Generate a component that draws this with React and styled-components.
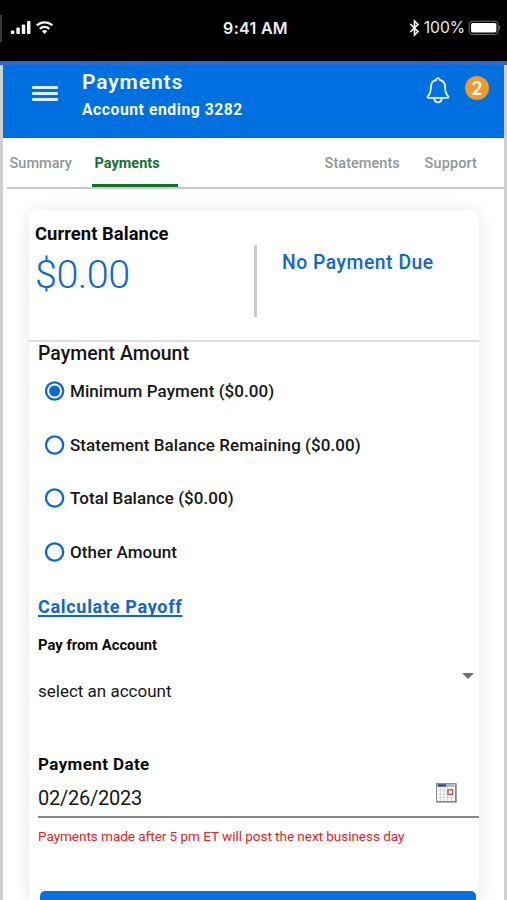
import React from "react";
import styled, { createGlobalStyle } from "styled-components";

const Global = createGlobalStyle`
  *, *::before, *::after { box-sizing: border-box; }
  body { margin: 0; background: #fff; overflow: hidden; }
`;

const Screen = styled.div`
  width: 507px;
  height: 900px;
  overflow: hidden;
  display: flex;
  flex-direction: column;
  font-family: Roboto, "Liberation Sans", sans-serif;
  background: #fff;
`;

const StatusBar = styled.header`
  flex: none;
  display: grid;
  grid-template-columns: 1fr auto 1fr;
  height: 61px;
  padding: 0 0 5px 4px;
  align-items: center;
  background: #000;
`;

const StatusGroup = styled.div`
  display: flex;
  align-items: center;
  margin-left: ${(p) => (p.$end ? 0 : -4)}px;
  padding-right: ${(p) => (p.$end ? 6 : 0)}px;
  justify-content: ${(p) => (p.$end ? "flex-end" : "flex-start")};
`;

const EdgeMark = styled.span`
  width: 2px;
  height: 27px;
  margin-right: 8px;
  background: #3a3a3a;
`;

const Label = styled.span`
  display: block;
  white-space: nowrap;
  font-size: ${(p) => p.$size}px;
  font-weight: ${(p) => p.$weight || 400};
  line-height: ${(p) => p.$line || 24}px;
  letter-spacing: ${(p) => p.$spacing || 0}px;
  color: ${(p) => p.$color || "#161616"};
`;

const StatusLabel = styled(Label)`
  font-family: Inter, Roboto, sans-serif;
`;

const Bluetooth = styled.svg`
  margin-right: 4px;
`;

const Body = styled.div`
  flex: 1;
  min-height: 0;
  display: flex;
  flex-direction: column;
  border-top: 4px solid #2c68cd;
`;

const Frame = styled.div`
  flex: 1;
  min-height: 0;
  display: flex;
  flex-direction: column;
  border: solid #d0d0d0;
  border-width: 0 3px;
`;

const AppBar = styled.div`
  flex: none;
  display: flex;
  height: 73px;
  padding: 0 15px 0 29px;
  background: #0070e0;
`;

const MenuButton = styled.button`
  display: flex;
  flex-direction: column;
  justify-content: space-between;
  width: 26px;
  height: 15px;
  margin: 21px 24px 0 0;
  padding: 0;
  border: 0;
  background: none;
`;

const MenuLine = styled.span`
  width: 100%;
  height: 3px;
  border-radius: 1px;
  background: #dceeff;
`;

const Heading = styled.div`
  flex: 1;
  padding-top: 3px;
`;

const Bell = styled.svg`
  margin: 12px 15px 0 0;
`;

const Badge = styled.span`
  display: flex;
  align-items: center;
  justify-content: center;
  width: 24px;
  height: 24px;
  margin-top: 11px;
  border-radius: 50%;
  background: #ee9b2d;
`;

const BadgeCount = styled(Label)`
  font-family: Lato, sans-serif;
`;

const Tabs = styled.nav`
  flex: none;
  display: flex;
  height: 51px;
  margin-left: 4px;
  border-bottom: 2px solid #c9c9c9;
`;

const Tab = styled.a`
  height: 49px;
  width: ${(p) => p.$width}px;
  padding: 14px 0 0 2.6px;
  margin-left: ${(p) => p.$gap || 0}px;
  border-bottom: ${(p) => (p.$active ? "3px solid #0b7228" : "0")};
`;

const Card = styled.main`
  flex: 1;
  min-height: 0;
  width: 450px;
  margin: 21px 0 0 26px;
  border-radius: 8px 8px 0 0;
  background: #fff;
  box-shadow: 0 2px 18px rgba(0, 0, 0, 0.11);
`;

const Summary = styled.section`
  display: flex;
  height: 132px;
  border-bottom: 2px solid #dcdcdc;
`;

const Balance = styled.div`
  width: 225px;
  padding: 12px 0 0 6px;
`;

const Divider = styled.div`
  width: 3px;
  height: 72px;
  margin-top: 35px;
  background: #cbcbcb;
`;

const Due = styled.div`
  padding: 41px 0 0 25px;
`;

const Form = styled.section`
  padding-left: 9px;
`;

const RadioList = styled.div`
  display: flex;
  flex-direction: column;
  gap: 29.7px;
  padding: 13px 0 0 7px;
`;

const RadioRow = styled.label`
  display: flex;
  align-items: center;
  gap: 5px;
  height: 24px;
`;

const RadioMark = styled.svg`
  flex: none;
`;

const PayoffLink = styled.a`
  display: block;
  height: 24px;
  margin-top: 31px;
`;

const PayoffText = styled(Label)`
  text-decoration: underline;
  text-decoration-thickness: 1.5px;
  text-underline-offset: 2px;
  text-decoration-skip-ink: none;
`;

const SourceLabel = styled.div`
  padding-top: 14px;
`;

const AccountSelect = styled.div`
  display: flex;
  justify-content: space-between;
  height: 46px;
  padding: 10px 5px 0 0;
  margin-top: 12px;
`;

const Caret = styled.svg`
  margin-top: -6px;
`;

const DateLabel = styled.div`
  padding-top: 37px;
`;

const DateField = styled.div`
  display: flex;
  justify-content: space-between;
  height: 42px;
  padding: 10px 22px 0 0;
  border-bottom: 2px solid #858989;
`;

const CalendarIcon = styled.svg`
  margin-top: -3px;
`;

const Notice = styled.div`
  padding-top: 6px;
`;

const SubmitButton = styled.button`
  display: block;
  width: 436px;
  height: 48px;
  margin: 43px 0 0 2px;
  border: 0;
  border-radius: 5px;
  background: #0870df;
`;

const blue = "#1067d2";
const gray = "#929696";

const options = [
  { text: "Minimum Payment ($0.00)", on: true },
  { text: "Statement Balance Remaining ($0.00)" },
  { text: "Total Balance ($0.00)" },
  { text: "Other Amount" },
];

export default function App() {
  return (
    <Screen>
      <Global />
      <StatusBar>
        <StatusGroup>
          <EdgeMark />
          <svg width="46" height="16" viewBox="-2 0 46 16" fill="#f2f2f2">
            <rect x="-1.2" y="10.5" width="3.5" height="3.5" rx="1" />
            <rect x="4.3" y="7.5" width="3.5" height="6.5" rx="1" />
            <rect x="9.8" y="4.5" width="3.5" height="9.5" rx="1" />
            <rect x="15" y="1" width="3.5" height="13" rx="1" />
            <g fill="none" stroke="#f2f2f2" strokeWidth="2.2">
              <path d="M24.8 5.4A11.5 11.5 0 0 1 40.4 5.4" />
              <path d="M27.8 8.9A6.8 6.8 0 0 1 37.4 8.9" />
            </g>
            <path d="M29.9 11.2A4 4 0 0 1 35.3 11.2L32.6 14Z" />
          </svg>
        </StatusGroup>
        <StatusLabel $size={16} $weight={600} $spacing={0.3} $color="#ededed">9:41 AM</StatusLabel>
        <StatusGroup $end>
          <Bluetooth width="11" height="18" viewBox="0 0 11 18" fill="none" stroke="#eee" strokeWidth="1.7">
            <path d="M1.3 5L9 12.6L5.5 16V2L9 5.4L1.3 13" />
          </Bluetooth>
          <StatusLabel $size={15.7} $weight={400} $spacing={-0.1} $color="#ededed">100%</StatusLabel>
          <svg width="36" height="16" viewBox="0 0 36 16">
            <rect x="4.2" y="1.2" width="29" height="13.2" rx="3.5" fill="none" stroke="#777" />
            <rect x="6" y="3" width="25.4" height="9.6" rx="1.8" fill="#fff" />
            <path d="M34.7 6V9.5" stroke="#777" />
          </svg>
        </StatusGroup>
      </StatusBar>
      <Body>
        <Frame>
          <AppBar>
            <MenuButton aria-label="Menu">
              <MenuLine />
              <MenuLine />
              <MenuLine />
            </MenuButton>
            <Heading>
              <Label $size={21} $weight={600} $line={28} $spacing={0.9} $color="#f4faff">Payments</Label>
              <Label $size={15.7} $weight={700} $line={28} $spacing={0.55} $color="#f4faff">Account ending 3282</Label>
            </Heading>
            <Bell width="24" height="27" viewBox="0 0 24 27" fill="none" stroke="#e9f6ff" strokeWidth="1.8" strokeLinejoin="round" strokeLinecap="round">
              <path d="M12 1.2C10.8 1.2 10.4 2 10.2 3C6.6 3.8 4.9 6.7 4.9 10.3C4.9 15.3 3.9 17.3 1.8 19.3C1.3 20.1 1.5 20.8 2.5 20.8H21.5C22.5 20.8 22.7 20.1 22.2 19.3C20.1 17.3 19.1 15.3 19.1 10.3C19.1 6.7 17.4 3.8 13.8 3C13.6 2 13.2 1.2 12 1.2Z" />
              <path d="M8.3 21.4C8.5 24 10 25.3 12 25.3C14 25.3 15.5 24 15.7 21.4" />
            </Bell>
            <Badge>
              <BadgeCount $size={18} $weight={700} $line={24} $color="#fff">2</BadgeCount>
            </Badge>
          </AppBar>
          <Tabs>
            <Tab $width={85}>
              <Label $size={14.5} $weight={500} $color={gray}>Summary</Label>
            </Tab>
            <Tab $width={86} $active>
              <Label $size={14.5} $weight={700} $color="#17712f">Payments</Label>
            </Tab>
            <Tab $width={100} $gap={144}>
              <Label $size={14.5} $weight={500} $color={gray} $spacing={0.05}>Statements</Label>
            </Tab>
            <Tab $width={80}>
              <Label $size={14.5} $weight={500} $color={gray} $spacing={0.1}>Support</Label>
            </Tab>
          </Tabs>
          <Card>
            <Summary>
              <Balance>
                <Label $size={18.4} $weight={700} $spacing={0.05} $color="#0c0c0c">Current Balance</Label>
                <Label $size={39.5} $weight={300} $line={58} $spacing={-0.5} $color={blue}>$0.00</Label>
              </Balance>
              <Divider />
              <Due>
                <Label $size={19.3} $weight={500} $spacing={0.55} $color={blue}>No Payment Due</Label>
              </Due>
            </Summary>
            <Form>
              <Label $size={19.5} $weight={500}>Payment Amount</Label>
              <RadioList>
                {options.map((o) => (
                  <RadioRow key={o.text}>
                    <RadioMark width="20" height="20" viewBox="0 0 20 20">
                      <circle cx="9.6" cy="10" r="8.6" fill="none" stroke={blue} strokeWidth="2.3" />
                      {o.on && <circle cx="9.6" cy="10" r="5.5" fill={blue} />}
                    </RadioMark>
                    <Label $size={17} $weight={500} $spacing={0.06}>{o.text}</Label>
                  </RadioRow>
                ))}
              </RadioList>
              <PayoffLink>
                <PayoffText as="u" $size={18} $weight={700} $spacing={0.7} $color={blue}>
                  Calculate Payoff
                </PayoffText>
              </PayoffLink>
              <SourceLabel>
                <Label $size={14.8} $weight={700} $color="#0c0c0c">Pay from Account</Label>
              </SourceLabel>
              <AccountSelect>
                <Label $size={17}>select an account</Label>
                <Caret width="12" height="6" viewBox="0 0 12 6" fill="#6e6e6e">
                  <path d="M0 0H12L6 6Z" />
                </Caret>
              </AccountSelect>
              <DateLabel>
                <Label $size={17} $weight={700} $spacing={0.4} $color="#0c0c0c">Payment Date</Label>
              </DateLabel>
              <DateField>
                <Label $size={20} $spacing={-0.25}>02/26/2023</Label>
                <CalendarIcon width="21" height="20" viewBox="0 0 21 20">
                  <rect x="0.5" y="0.5" width="19.5" height="18.5" fill="#fafafa" stroke="#8f8f8f" />
                  <rect x="19" y="1" width="1.5" height="18.5" fill="#858585" />
                  <rect x="1" y="18" width="19.5" height="1.3" fill="#858585" />
                  <rect x="1.5" y="1.2" width="9" height="2.5" fill="#303c9c" />
                  <rect x="10.5" y="1.2" width="8" height="2.5" fill="#a9a9b4" />
                  <path d="M2 7.5H18M2 11H18M2 14.5H18M4.5 4V18M8 4V18M11.5 4V18M15.5 4V18" stroke="#cfd0d4" strokeWidth="0.8" />
                  <rect x="12" y="6.8" width="4.6" height="4.6" fill="#f8eeee" stroke="#b55353" strokeWidth="1.3" />
                </CalendarIcon>
              </DateField>
              <Notice>
                <Label $size={13.6} $spacing={-0.07} $color="#de2626">Payments made after 5 pm ET will post the next business day</Label>
              </Notice>
              <SubmitButton aria-label="Submit" />
            </Form>
          </Card>
        </Frame>
      </Body>
    </Screen>
  );
}
